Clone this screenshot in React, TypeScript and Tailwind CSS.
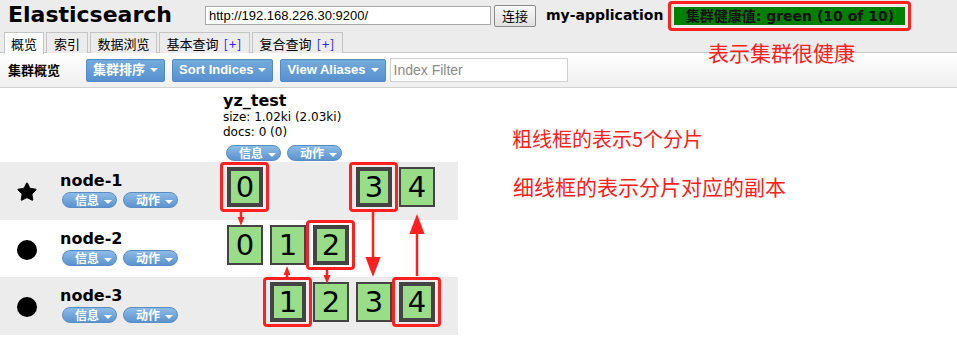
import { Star } from 'lucide-react'

const FONT = '"DejaVu Sans", "Noto Sans CJK SC", sans-serif'
const CJK = '"Noto Sans CJK SC", "DejaVu Sans", sans-serif'

type Shard = { n: number; primary: boolean; mark?: boolean } | null

const nodes: { name: string; master: boolean; shards: Shard[] }[] = [
  {
    name: 'node-1',
    master: true,
    shards: [{ n: 0, primary: true, mark: true }, null, null, { n: 3, primary: true, mark: true }, { n: 4, primary: false }],
  },
  {
    name: 'node-2',
    master: false,
    shards: [{ n: 0, primary: false }, { n: 1, primary: false }, { n: 2, primary: true, mark: true }],
  },
  {
    name: 'node-3',
    master: false,
    shards: [null, { n: 1, primary: true, mark: true }, { n: 2, primary: false }, { n: 3, primary: false }, { n: 4, primary: true, mark: true }],
  },
]

const tabs = [
  { label: '概览', w: 'w-[40px]' },
  { label: '索引', w: 'w-[42px]' },
  { label: '数据浏览', w: 'w-[67px]' },
  { label: '基本查询', w: 'w-[91px]', plus: true },
  { label: '复合查询', w: 'w-[91px]', plus: true },
]

function Caret() {
  return <span className="inline-block ml-[5px] border-x-[4px] border-x-transparent border-t-[4px] border-t-white align-middle" />
}

function Pill({ label }: { label: string }) {
  return (
    <div
      className="h-[16px] w-[55px] overflow-hidden rounded-full border border-[#5a8cc4] bg-gradient-to-b from-[#8dbbe6] to-[#5b93cf] text-white text-[12px] font-bold leading-[14px] pl-[12px]"
      style={{ fontFamily: CJK }}
    >
      {label}
      <Caret />
    </div>
  )
}

function BlueButton({ label }: { label: string }) {
  return (
    <button
      className="h-[23px] px-[6px] rounded-[2px] border border-[#5489c2] bg-gradient-to-b from-[#74abdd] to-[#5790ce] text-white text-[13px] font-bold flex items-center"
      style={{ fontFamily: '"Liberation Sans", "Noto Sans CJK SC", sans-serif' }}
    >
      {label}
      <Caret />
    </button>
  )
}

function ShardBox({ shard }: { shard: Shard }) {
  if (!shard) return <div className="w-[36px] h-[40px]" />
  return (
    <div className="relative w-[36px] h-[40px]">
      <div
        className={`w-full h-full bg-[#99dd88] border-[#444] flex items-center justify-center text-[29px] text-black leading-none ${shard.primary ? 'border-[4px]' : 'border-[2.5px]'}`}
        style={{ fontFamily: FONT }}
      >
        {shard.n}
      </div>
      {shard.mark && <span className="absolute -left-[7px] -right-[6px] -top-[5px] -bottom-[5px] border-[3px] border-[#ff2020] rounded-[4px]" />}
    </div>
  )
}

function Arrow({ x, y1, y2, up, head }: { x: number; y1: number; y2: number; up?: boolean; head: number }) {
  const tip = up ? y1 : y2
  const base = up ? y1 + head : y2 - head
  const w = head * 0.38
  return (
    <g fill="#ff2020" stroke="#ff2020">
      <line x1={x} y1={up ? base : y1} x2={x} y2={up ? y2 : base} strokeWidth={2.5} />
      <polygon points={`${x},${tip} ${x - w},${base} ${x + w},${base}`} strokeWidth={0} />
    </g>
  )
}

export default function App() {
  return (
    <div className="relative w-[957px] h-[343px] overflow-hidden bg-white text-black" style={{ fontFamily: FONT }}>
      <div className="bg-[#ececec] border-b border-[#c8c8c8] h-[53px]">
        <div className="flex items-center h-[31px] pl-[8px]">
          <div className="text-[22px] font-bold w-[197px] leading-none pb-[1px]">Elasticsearch</div>
          <input
            readOnly
            value="http://192.168.226.30:9200/"
            className="w-[286px] h-[19px] border border-[#a9a9a9] bg-white px-[3px] text-[13px] outline-none"
            style={{ fontFamily: '"Liberation Sans", sans-serif' }}
          />
          <button
            className="ml-[3px] h-[22px] w-[42px] rounded-[2px] border border-[#8a8a8a] bg-gradient-to-b from-[#fafafa] to-[#e0e0e0] text-[13px]"
            style={{ fontFamily: CJK }}
          >
            连接
          </button>
          <div className="ml-[10px] text-[14px] font-bold">my-application</div>
          <div className="ml-[5px] p-[3px] border-[3px] border-[#ff2020] rounded-[4px]">
            <div className="w-[231px] h-[18px] bg-[#008000] text-[#111] text-[14px] font-bold leading-[18px] text-center" style={{ fontFamily: FONT }}>
              集群健康值: green (10 of 10)
            </div>
          </div>
        </div>
        <div className="flex items-end gap-[2px] pl-[4px] h-[22px] text-[13px]" style={{ fontFamily: CJK }}>
          {tabs.map((t, i) => (
            <div
              key={t.label}
              className={`${t.w} border border-[#c4c4c4] border-b-0 flex items-center justify-center leading-none ${i === 0 ? 'bg-[#fcfcfc] h-[22px] -mb-px' : 'bg-[#ececec] h-[21px]'}`}
            >
              {t.label}
              {t.plus && <span className="ml-[5px] text-[#2222ee] tracking-[1px]">[+]</span>}
            </div>
          ))}
        </div>
      </div>

      <div className="h-[35px] flex items-center gap-[7px] pl-[8px] bg-gradient-to-b from-white to-[#efefef] border-b border-[#d2d2d2]">
        <div className="w-[71px] text-[13px] font-bold" style={{ fontFamily: CJK }}>
          集群概览
        </div>
        <BlueButton label="集群排序" />
        <BlueButton label="Sort Indices" />
        <BlueButton label="View Aliases" />
        <input
          readOnly
          placeholder="Index Filter"
          className="-ml-[3px] w-[178px] h-[24px] border border-[#cfcfcf] bg-white px-[3px] text-[14px] placeholder:text-[#8a8a8a] outline-none"
          style={{ fontFamily: '"Liberation Sans", sans-serif' }}
        />
      </div>

      <div className="w-[458px]">
        <div className="h-[74px] pl-[223px] pt-[3px]">
          <div className="text-[16px] font-bold leading-[19px]">yz_test</div>
          <div className="text-[12px] leading-[15px]">size: 1.02ki (2.03ki)</div>
          <div className="text-[12px] leading-[15px]">docs: 0 (0)</div>
          <div className="flex gap-[6px] pl-[3px] mt-[5px]">
            <Pill label="信息" />
            <Pill label="动作" />
          </div>
        </div>
        {nodes.map((node, i) => (
          <div key={node.name} className={`flex ${i % 2 === 0 ? 'bg-[#ececec]' : 'bg-white'} ${i === 1 ? 'h-[57px]' : 'h-[58px]'}`}>
            <div className="w-[60px] flex items-center justify-center pr-[6px] pt-[2px]">
              {node.master ? (
                <Star className="w-[22px] h-[22px] fill-black" strokeWidth={1} />
              ) : (
                <div className="w-[20px] h-[20px] rounded-full bg-black" />
              )}
            </div>
            <div className="w-[167px] pt-[9px]">
              <div className="text-[16px] font-bold leading-[20px]">{node.name}</div>
              <div className="flex gap-[6px] pl-[2px] mt-[1px]">
                <Pill label="信息" />
                <Pill label="动作" />
              </div>
            </div>
            <div className="flex gap-[7px] pt-[5px]">
              {node.shards.map((s, j) => (
                <ShardBox key={j} shard={s} />
              ))}
            </div>
          </div>
        ))}
      </div>

      <div className="absolute left-[708px] top-[37px] text-[21px] text-[#ff2020]" style={{ fontFamily: CJK }}>
        表示集群很健康
      </div>
      <div className="absolute left-[512px] top-[124px] text-[20px] text-[#ff2020]" style={{ fontFamily: CJK }}>
        粗线框的表示5个分片
      </div>
      <div className="absolute left-[513px] top-[171px] text-[21px] text-[#ff2020]" style={{ fontFamily: CJK }}>
        细线框的表示分片对应的副本
      </div>

      <svg className="absolute left-0 top-0 pointer-events-none" width={957} height={343}>
        <Arrow x={241} y1={212} y2={226} head={9} />
        <Arrow x={287} y1={266} y2={279} up head={9} />
        <Arrow x={327} y1={270} y2={284} head={9} />
        <Arrow x={373} y1={212} y2={277} head={20} />
        <Arrow x={417} y1={214} y2={276} up head={20} />
      </svg>
    </div>
  )
}
